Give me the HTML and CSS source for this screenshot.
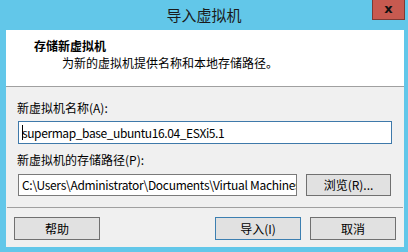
FILE: index.html
```html
<!DOCTYPE html>
<html lang="zh-CN">
<head>
<meta charset="utf-8">
<title>导入虚拟机</title>
<link rel="stylesheet" href="styles.css">
</head>
<body>
<div class="window">
  <div class="titlebar">
    <div class="spacer"></div>
    <div class="title">导入虚拟机</div>
    <div class="close"><span>x</span></div>
  </div>
  <div class="client">
    <div class="header">
      <div class="h-title">存储新虚拟机</div>
      <div class="h-sub">为新的虚拟机提供名称和本地存储路径。</div>
    </div>
    <div class="body">
      <div class="label">新虚拟机名称(A):</div>
      <div class="input focused"><span class="caret"></span>supermap_base_ubuntu16.04_ESXi5.1</div>
      <div class="label label2">新虚拟机的存储路径(P):</div>
      <div class="row">
        <div class="input path">C:\Users\Administrator\Documents\Virtual Machines</div>
        <div class="btn browse">浏览(R)...</div>
      </div>
    </div>
    <div class="sep"></div>
    <div class="footer">
      <div class="btn">帮助</div>
      <div class="grow"></div>
      <div class="btn default">导入(I)</div>
      <div class="btn">取消</div>
    </div>
  </div>
</div>
</body>
</html>
```
FILE: styles.css
```css
html, body {
  margin: 0;
  padding: 0;
}
body {
  width: 408px;
  height: 252px;
  background: #62c7e9;
  font-family: "Noto Sans CJK SC", "Noto Sans", sans-serif;
  font-size: 12px;
  color: #000;
  overflow: hidden;
}
.window {
  display: flex;
  flex-direction: column;
}
.titlebar {
  height: 30px;
  display: flex;
  align-items: flex-start;
}
.spacer {
  width: 36px;
}
.title {
  flex: 1;
  text-align: center;
  font-size: 15px;
  line-height: 30px;
  color: #1a1a1a;
}
.close {
  width: 31px;
  height: 19px;
  margin-right: 3px;
  background: #c75a50;
  border: 1px solid #7d3a34;
  border-top: 0;
  display: flex;
  align-items: center;
  justify-content: center;
}
.close span {
  font-family: "DejaVu Sans", sans-serif;
  font-weight: bold;
  font-size: 13px;
  line-height: 13px;
  color: #111;
  margin-top: -2px;
}
.client {
  margin: 0 4px 0 6px;
  height: 217px;
  background: #f0f0f0;
  display: flex;
  flex-direction: column;
}
.header {
  background: #fff;
  border-bottom: 1px solid #a0a0a0;
  padding-top: 8px;
  box-sizing: border-box;
  height: 57px;
}
.h-title {
  font-weight: bold;
  line-height: 16px;
  padding-left: 28px;
}
.h-sub {
  line-height: 17px;
  padding-left: 56px;
}
.body {
  padding: 13px 0 0 12px;
}
.label {
  line-height: 16px;
  margin-left: -1px;
}
.label2 {
  margin-top: 8px;
}
.input {
  box-sizing: border-box;
  height: 23px;
  width: 374px;
  margin-top: 5px;
  background: #fff;
  border: 1px solid #7a7a7a;
  padding-left: 3px;
  line-height: 21px;
  white-space: nowrap;
  overflow: hidden;
  position: relative;
  letter-spacing: -0.4px;
}
.input.focused {
  border-color: #3e79aa;
}
.caret {
  position: absolute;
  left: 3px;
  top: 3px;
  width: 1px;
  height: 15px;
  background: #000;
}
.row {
  display: flex;
  gap: 9px;
  margin-top: 6px;
}
.input.path {
  width: 279px;
  height: 22px;
  margin-top: 0;
  line-height: 20px;
  letter-spacing: -0.3px;
}
.btn {
  box-sizing: border-box;
  width: 86px;
  height: 23px;
  background: #e1e1e1;
  border: 1px solid #707070;
  text-align: center;
  line-height: 21px;
}
.btn.browse {
  width: 85px;
  height: 22px;
  line-height: 20px;
}
.btn.default {
  border-color: #3c7fb1;
}
.sep {
  height: 1px;
  background: #a0a0a0;
  margin: 11px 1px 0 1px;
}
.footer {
  display: flex;
  gap: 9px;
  padding: 9px 8px 0 8px;
}
.grow {
  flex: 1;
}
```
